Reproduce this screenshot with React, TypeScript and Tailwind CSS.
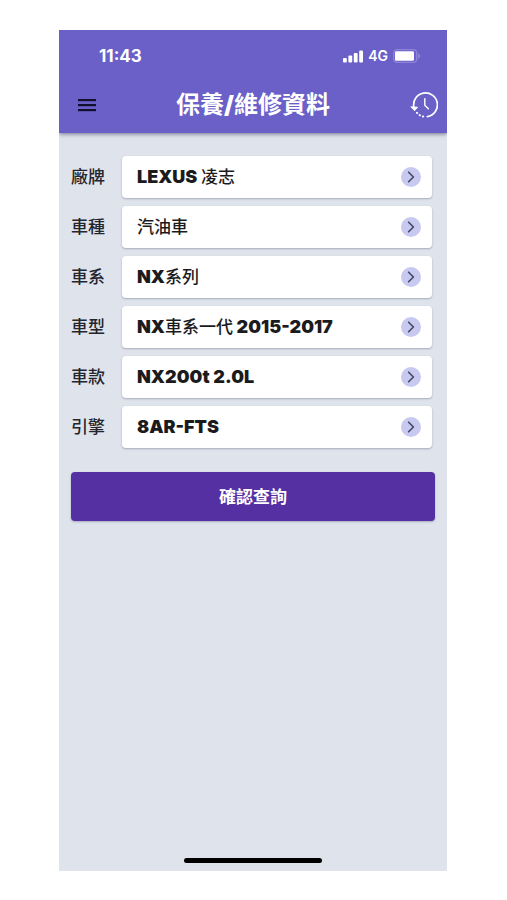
import React from "react";

type Field = { id: string; label: string; parts: string[] };

const fields: Field[] = [
  { id: "brand", label: "廠牌", parts: ["LEXUS ", "凌志"] },
  { id: "kind", label: "車種", parts: ["汽油車"] },
  { id: "series", label: "車系", parts: ["NX", "系列"] },
  { id: "model", label: "車型", parts: ["NX", "車系一代", " 2015-2017"] },
  { id: "trim", label: "車款", parts: ["NX200t 2.0L"] },
  { id: "engine", label: "引擎", parts: ["8AR-FTS"] },
];

const isLatin = (text: string) => /^[\x20-\x7e]+$/.test(text);

function SignalIcon() {
  return (
    <svg width="20" height="13" viewBox="0 0 20 13" fill="currentColor" aria-hidden="true">
      <rect x="0" y="8" width="3.8" height="4.5" rx="1" />
      <rect x="5.4" y="5.6" width="3.8" height="6.9" rx="1" />
      <rect x="10.8" y="3" width="3.8" height="9.5" rx="1" />
      <rect x="16.2" y="0.4" width="3.8" height="12.1" rx="1" />
    </svg>
  );
}

function BatteryIcon() {
  return (
    <svg width="28" height="14" viewBox="0 0 28 14" aria-hidden="true">
      <rect x="0.7" y="0.7" width="23" height="12.6" rx="3.4" fill="none" stroke="#8f84d8" strokeWidth="1.3" />
      <rect x="2" y="2.2" width="19" height="9.6" rx="1.4" fill="#fff" />
      <path d="M25 3.8 L27.6 7 L25 10.2 Z" fill="#8f84d8" />
    </svg>
  );
}

function HistoryIcon() {
  return (
    <svg width="28" height="26" viewBox="0 0 28 26" fill="none" stroke="currentColor" aria-hidden="true">
      <path d="M3.8 15 A11.9 11.9 0 1 1 17.4 24.6" strokeWidth="1.7" strokeLinecap="round" />
      <path d="M7 20.8 A11.9 11.9 0 0 0 15.2 24.9" strokeWidth="2" strokeLinecap="round" strokeDasharray="0.3 3.2" />
      <path d="M0.8 14.8 L7.6 15.2 L4.6 18.8 Z" fill="currentColor" strokeWidth="0.8" strokeLinejoin="round" />
      <path d="M14.8 6.6 V13.2 L18.4 16.8" strokeWidth="1.4" strokeLinecap="round" strokeLinejoin="round" />
    </svg>
  );
}

function FieldRow({ id, label, parts }: Field) {
  return (
    <div className="flex items-center">
      <label
        id={`${id}-label`}
        htmlFor={id}
        className="w-[51px] shrink-0 text-[17px] leading-6 font-medium text-[#24252d]"
      >
        {label}
      </label>
      <button
        id={id}
        type="button"
        aria-labelledby={`${id}-label ${id}-value`}
        className="flex h-[42px] min-w-0 flex-1 items-center justify-between rounded bg-white pr-[11px] pl-[15px] text-left shadow-[0_1px_2px_rgba(40,40,80,0.3)]"
      >
        <span id={`${id}-value`} className="text-[17px] leading-6 whitespace-pre text-[#1b1b1d]">
          {parts.map((part) => (
            <span key={part} className={isLatin(part) ? "text-lg leading-6 font-black" : "font-medium"}>
              {part}
            </span>
          ))}
        </span>
        <span className="flex size-5 items-center justify-center rounded-full bg-[#c8c9f1]">
          <svg width="20" height="20" viewBox="0 0 20 20" fill="none" stroke="#45465e" strokeWidth="1.6" aria-hidden="true">
            <path d="M7.6 5.2 L12.4 10 L7.6 14.8" strokeLinecap="round" strokeLinejoin="round" />
          </svg>
        </span>
      </button>
    </div>
  );
}

export default function App() {
  return (
    <div
      lang="zh-Hant"
      className="flex min-h-screen flex-col bg-white pt-[30px] pr-[60px] pb-[29px] pl-[59px] font-['Inter','Noto_Sans_CJK_TC',sans-serif]"
    >
      <div className="flex flex-1 flex-col overflow-hidden bg-[#dfe3eb]">
        <header className="bg-[#6a60c8] text-white shadow-[0_1px_4px_rgba(40,40,80,0.6)]">
          <div className="flex h-[52px] items-center justify-between pr-[26px] pl-10">
            <span className="text-[17px] leading-5 font-bold">11:43</span>
            <div className="flex items-center gap-[5px]">
              <SignalIcon />
              <span className="text-sm leading-5 font-semibold">4G</span>
              <BatteryIcon />
            </div>
          </div>
          <div className="grid h-[51px] grid-cols-[1fr_auto_1fr] items-start pr-[9px] pl-[9px]">
            <button
              type="button"
              aria-label="選單"
              className="ml-[9px] flex h-[46px] w-7 items-center text-[#12102e]"
            >
              <svg width="20" height="14" viewBox="0 0 20 14" fill="currentColor" aria-hidden="true">
                <rect x="1" y="1" width="18" height="2.2" />
                <rect x="1" y="6" width="18" height="2.2" />
                <rect x="1" y="11" width="18" height="2.2" />
              </svg>
            </button>
            <h1 className="text-2xl leading-[46px] font-bold">
              保養<span className="font-black">/</span>維修資料
            </h1>
            <button type="button" aria-label="歷史紀錄" className="flex h-[46px] items-center justify-self-end">
              <HistoryIcon />
            </button>
          </div>
        </header>

        <main className="flex-1 px-3 pt-[23px]">
          <form onSubmit={(event) => event.preventDefault()}>
            <div className="flex flex-col gap-2 pr-[3px]">
              {fields.map((field) => (
                <FieldRow key={field.id} {...field} />
              ))}
            </div>
            <button
              type="submit"
              className="mt-6 h-[49px] w-full rounded bg-[#5430a3] text-[17px] leading-6 font-bold text-white shadow-[0_1px_2px_rgba(40,40,80,0.3)]"
            >
              確認查詢
            </button>
          </form>
        </main>

        <div className="mx-auto mb-2 h-[5px] w-[138px] rounded-full bg-black" />
      </div>
    </div>
  );
}
